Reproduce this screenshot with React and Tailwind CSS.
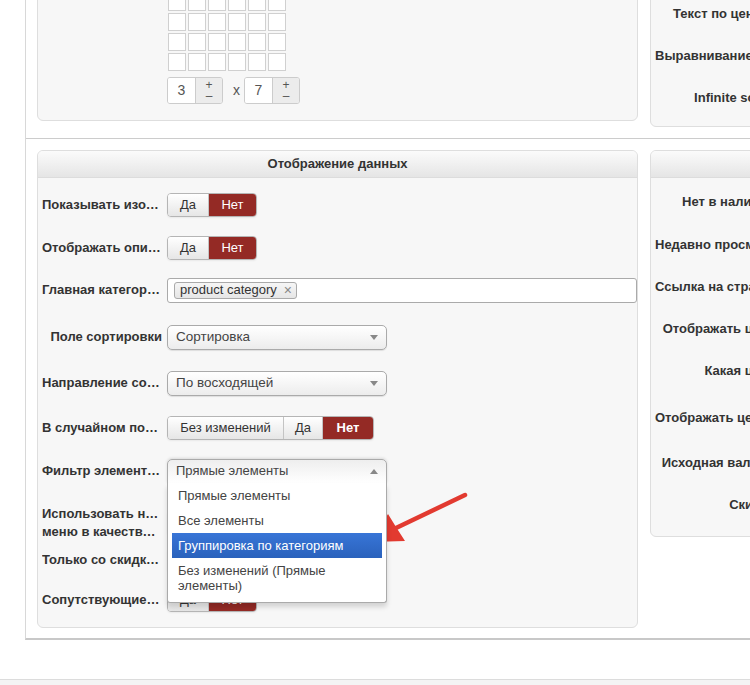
import React from 'react'

const seg = 'flex items-center justify-center h-full'
const off = 'bg-gradient-to-b from-white to-[#e6e6e6] text-[#333] border-r border-[#c4c4c4]'
const on = 'bg-[#942a25] text-white'

function Toggle({ items }) {
  return (
    <div className="flex h-[24px] rounded-[4px] border border-[#b5b5b5] overflow-hidden shadow-[0_1px_2px_rgba(0,0,0,0.06)] text-[13px]">
      {items.map((it) => (
        <span key={it.t} className={`${seg} ${it.w} ${it.on ? on : off} ${it.bold ? 'font-bold' : ''}`}>
          {it.t}
        </span>
      ))}
    </div>
  )
}

const yesNo = [
  { t: 'Да', w: 'w-[41px]' },
  { t: 'Нет', w: 'w-[47px]', on: true },
]

function Select({ value }) {
  return (
    <div className="flex items-center justify-between w-[220px] h-[25px] border border-[#aaa] rounded-[5px] bg-gradient-to-b from-white via-[#f6f6f6] to-[#ececec] shadow-[0_1px_1px_rgba(0,0,0,0.1)] pl-[8px] pr-[8px] text-[13.5px] text-[#444]">
      <span>{value}</span>
      <span className="w-0 h-0 border-l-[4px] border-r-[4px] border-t-[5px] border-l-transparent border-r-transparent border-t-[#888]" />
    </div>
  )
}

function Row({ label, mt, children }) {
  return (
    <div className={`flex items-center h-[24px] ${mt}`}>
      <div className="w-[120px] shrink-0 text-right font-bold truncate">{label}</div>
      <div className="ml-[5px]">{children}</div>
    </div>
  )
}

function RightRow({ label, mt }) {
  return (
    <div className={`flex items-center h-[24px] ${mt}`}>
      <div className="w-[120px] shrink-0 text-right font-bold truncate">{label}</div>
    </div>
  )
}

function Header({ title }) {
  return (
    <div className="h-[27px] rounded-t-[5px] bg-gradient-to-b from-[#fbfbfb] to-[#e5e5e5] border-b border-[#dcdcdc] text-center font-bold leading-[26px]">
      {title}
    </div>
  )
}

function Spinner({ value }) {
  return (
    <div className="flex h-[27px] border border-[#ccc] rounded-[3px] overflow-hidden">
      <span className="w-[27px] bg-white flex items-center justify-center text-[14px] text-[#555]">{value}</span>
      <span className="w-[27px] bg-[#ececec] border-l border-[#ccc] flex flex-col items-center justify-center text-[12px] leading-[11px] text-[#555]">
        <span>+</span>
        <span>–</span>
      </span>
    </div>
  )
}

const options = ['Прямые элементы', 'Все элементы', 'Группировка по категориям', 'Без изменений (Прямые элементы)']

export default function App() {
  return (
    <div className="relative w-full h-[685px] overflow-hidden bg-white text-[13px] text-[#333] font-['Liberation_Sans',Arial,sans-serif]">
      <div className="ml-[25px] w-[900px] border-l border-[#d8d8d8] border-b-2 border-b-[#c8c8c8]">
        {/* top section, scrolled partly out of view */}
        <div className="-mt-[20px] flex items-start gap-[12px] pl-[11px] pb-[11px] border-b border-[#ccc]">
          <div className="w-[601px] shrink-0 rounded-b-[6px] border border-[#dedede] bg-[#f7f7f7] pt-[12px] pb-[16px] pl-[130px]">
            <div className="grid grid-cols-6 gap-[2px] w-fit">
              {Array.from({ length: 24 }).map((_, i) => (
                <span key={i} className="w-[18px] h-[18px] border border-[#d0d0d0] bg-white" />
              ))}
            </div>
            <div className="flex items-center mt-[6px] -ml-px">
              <Spinner value="3" />
              <span className="ml-[10px] mr-[4px] text-[#555] text-[14px]">x</span>
              <Spinner value="7" />
            </div>
          </div>
          <div className="w-[300px] shrink-0 rounded-b-[6px] border border-[#dedede] bg-[#f7f7f7] pt-[21px] pb-[16px] pl-[4px]">
            <RightRow label="Текст по центру" mt="mt-0" />
            <RightRow label="Выравнивание текста" mt="mt-[18px]" />
            <RightRow label="Infinite scroll" mt="mt-[18px]" />
          </div>
        </div>

        <div className="pt-[11px] flex items-start gap-[12px] pl-[11px] pb-[10px]">
          <div className="w-[601px] shrink-0 rounded-[6px] border border-[#dedede] bg-[#f7f7f7] pl-[4px] pb-[15px]">
            <div className="-ml-[4px]">
              <Header title="Отображение данных" />
            </div>
            <Row label="Показывать изображения" mt="mt-[15px]">
              <Toggle items={yesNo} />
            </Row>
            <Row label="Отображать описание" mt="mt-[19px]">
              <Toggle items={yesNo} />
            </Row>
            <Row label="Главная категория" mt="mt-[18px]">
              <div className="flex items-center w-[470px] h-[25px] border border-[#aaa] rounded-[3px] bg-white pl-[6px]">
                <span className="flex items-center h-[17px] border border-[#aaa] rounded-[3px] bg-gradient-to-b from-[#f6f6f6] to-[#e6e6e6] pl-[5px] pr-[4px] text-[13px] text-[#333]">
                  product category
                  <span className="ml-[7px] text-[#888] text-[14px] leading-none">×</span>
                </span>
              </div>
            </Row>
            <Row label="Поле сортировки" mt="mt-[23px]">
              <Select value="Сортировка" />
            </Row>
            <Row label="Направление сортировки" mt="mt-[22px]">
              <Select value="По восходящей" />
            </Row>
            <Row label="В случайном порядке" mt="mt-[21px]">
              <Toggle
                items={[
                  { t: 'Без изменений', w: 'w-[116px]' },
                  { t: 'Да', w: 'w-[39px]' },
                  { t: 'Нет', w: 'w-[50px]', on: true, bold: true },
                ]}
              />
            </Row>
            <Row label="Фильтр элементов" mt="mt-[19px]">
              <div className="relative z-20">
                <div className="flex items-center justify-between w-[220px] h-[25px] border border-[#aaa] rounded-t-[5px] bg-gradient-to-b from-[#eee] to-white shadow-[0_-1px_3px_rgba(0,0,0,0.12)] pl-[8px] pr-[8px] text-[13px] text-[#444]">
                  <span>Прямые элементы</span>
                  <span className="w-0 h-0 border-l-[4px] border-r-[4px] border-b-[5px] border-l-transparent border-r-transparent border-b-[#888]" />
                </div>
                <ul className="absolute left-0 top-[24px] w-[220px] bg-white border border-t-0 border-[#aaa] rounded-b-[3px] shadow-[0_4px_5px_rgba(0,0,0,0.15)] pl-[4px] pr-[4px] pb-[4px]">
                  {options.map((o, i) => (
                    <li
                      key={o}
                      className={`px-[6px] py-[5px] leading-[15px] text-[13px] ${
                        i === 2 ? 'bg-gradient-to-b from-[#3875d7] to-[#2a62bc] text-white' : 'text-[#444]'
                      }`}
                    >
                      {o}
                    </li>
                  ))}
                </ul>
              </div>
            </Row>
            <div className="flex items-center h-[24px] mt-[28px]">
              <div className="w-[120px] shrink-0 font-bold leading-[18px]">
                <div className="truncate">Использовать название</div>
                <div className="truncate">меню в качестве заголовка</div>
              </div>
              <div className="ml-[5px]">
                <Toggle items={yesNo} />
              </div>
            </div>
            <Row label="Только со скидкой на товар" mt="mt-[13px]">
              <Toggle items={yesNo} />
            </Row>
            <Row label="Сопутствующие товары" mt="mt-[16px]">
              <Toggle items={yesNo} />
            </Row>
          </div>

          <div className="w-[300px] shrink-0 rounded-[6px] border border-[#dedede] bg-[#f7f7f7] pl-[4px] pb-[19px]">
            <div className="-ml-[4px]">
              <Header title="" />
            </div>
            <RightRow label="Нет в наличии" mt="mt-[12px]" />
            <RightRow label="Недавно просмотренные" mt="mt-[19px]" />
            <RightRow label="Ссылка на страницу товара" mt="mt-[18px]" />
            <RightRow label="Отображать цену" mt="mt-[18px]" />
            <RightRow label="Какая цена" mt="mt-[18px]" />
            <RightRow label="Отображать цену со скидкой" mt="mt-[23px]" />
            <RightRow label="Исходная валюта" mt="mt-[21px]" />
            <RightRow label="Скидка" mt="mt-[18px]" />
          </div>
        </div>
      </div>

      <div className="mt-[39px] border-t border-[#dcdcdc] h-[10px] bg-[#f4f4f4]" />

      <svg className="absolute left-0 top-0 pointer-events-none" width="750" height="685" viewBox="0 0 750 685">
        <line x1="465" y1="495" x2="396" y2="528" stroke="#e23a30" strokeWidth="4.5" strokeLinecap="round" />
        <polygon points="371,542 388,514 396,527 405,541" fill="#e23a30" />
      </svg>
    </div>
  )
}
